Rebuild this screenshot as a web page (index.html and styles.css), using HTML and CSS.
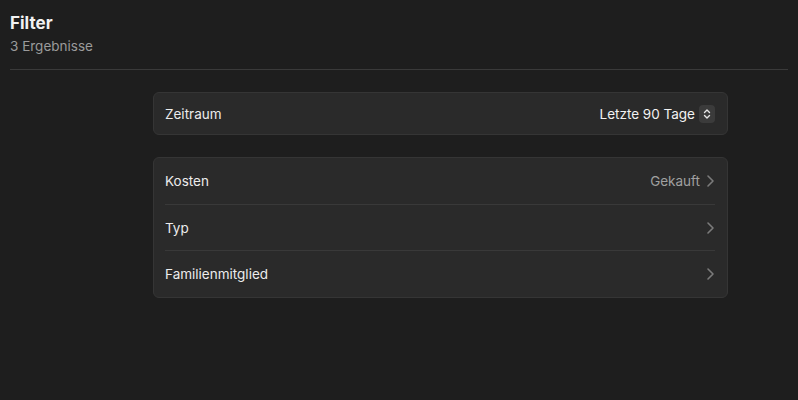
FILE: index.html
```html
<!DOCTYPE html>
<html lang="de">
<head>
<meta charset="utf-8">
<link rel="stylesheet" href="styles.css">
</head>
<body>
<header class="head">
  <h1 class="title">Filter</h1>
  <p class="subtitle">3 Ergebnisse</p>
</header>
<main class="content">
  <section class="card">
    <div class="row">
      <span class="label">Zeitraum</span>
      <span class="value value-strong">Letzte 90 Tage
        <span class="stepper">
          <svg width="10" height="12" viewBox="0 0 10 12"><path d="M2.5 4.5 5 2l2.5 2.5M2.5 7.5 5 10l2.5-2.5" fill="none" stroke="#e6e6e6" stroke-width="1.4" stroke-linecap="round" stroke-linejoin="round"/></svg>
        </span>
      </span>
    </div>
  </section>
  <section class="card">
    <div class="row">
      <span class="label">Kosten</span>
      <span class="value">Gekauft <svg class="chev" width="9" height="14" viewBox="0 0 9 14"><path d="M2 2l5 5-5 5" fill="none" stroke="#7b7b7b" stroke-width="1.6" stroke-linecap="round" stroke-linejoin="round"/></svg></span>
    </div>
    <div class="row">
      <span class="label">Typ</span>
      <span class="value"><svg class="chev" width="9" height="14" viewBox="0 0 9 14"><path d="M2 2l5 5-5 5" fill="none" stroke="#7b7b7b" stroke-width="1.6" stroke-linecap="round" stroke-linejoin="round"/></svg></span>
    </div>
    <div class="row">
      <span class="label">Familienmitglied</span>
      <span class="value"><svg class="chev" width="9" height="14" viewBox="0 0 9 14"><path d="M2 2l5 5-5 5" fill="none" stroke="#7b7b7b" stroke-width="1.6" stroke-linecap="round" stroke-linejoin="round"/></svg></span>
    </div>
  </section>
</main>
</body>
</html>
```

FILE: styles.css
```css
html, body {
  margin: 0;
  padding: 0;
  background: #1e1e1e;
  height: 100%;
}
body {
  font-family: Inter, "Noto Sans", sans-serif;
  color: #e8e8e8;
  -webkit-font-smoothing: antialiased;
}
.head {
  margin: 0 10px;
  padding: 13px 0 14px;
  border-bottom: 1px solid #3a3a3a;
}
.title {
  margin: 0;
  font-size: 17px;
  font-weight: 700;
  line-height: 20px;
  color: #f2f2f2;
}
.subtitle {
  margin: 4px 0 0;
  font-size: 13.5px;
  line-height: 18px;
  color: #9b9b9b;
}
.content {
  width: 575px;
  margin: 22px 0 0 153px;
  display: flex;
  flex-direction: column;
  gap: 22px;
}
.card {
  background: #2a2a2a;
  border: 1px solid #353535;
  border-radius: 6px;
  padding: 0 12px 0 11px;
}
.row {
  display: flex;
  align-items: center;
  justify-content: space-between;
  height: 41px;
}
.card + .card .row {
  height: 45px;
}
.card + .card .row:first-child,
.card + .card .row:last-child {
  height: 46px;
}
.card + .card .row + .row {
  border-top: 1px solid #393939;
}
.label {
  font-size: 13.5px;
  color: #ececec;
}
.value {
  display: flex;
  align-items: center;
  gap: 6px;
  font-size: 13.5px;
  color: #a0a0a0;
}
.value-strong {
  color: #f2f2f2;
  gap: 4px;
}
.stepper {
  width: 16px;
  height: 18px;
  border-radius: 4px;
  background: #3b3b3b;
  display: flex;
  align-items: center;
  justify-content: center;
}
.chev {
  display: block;
}
```
